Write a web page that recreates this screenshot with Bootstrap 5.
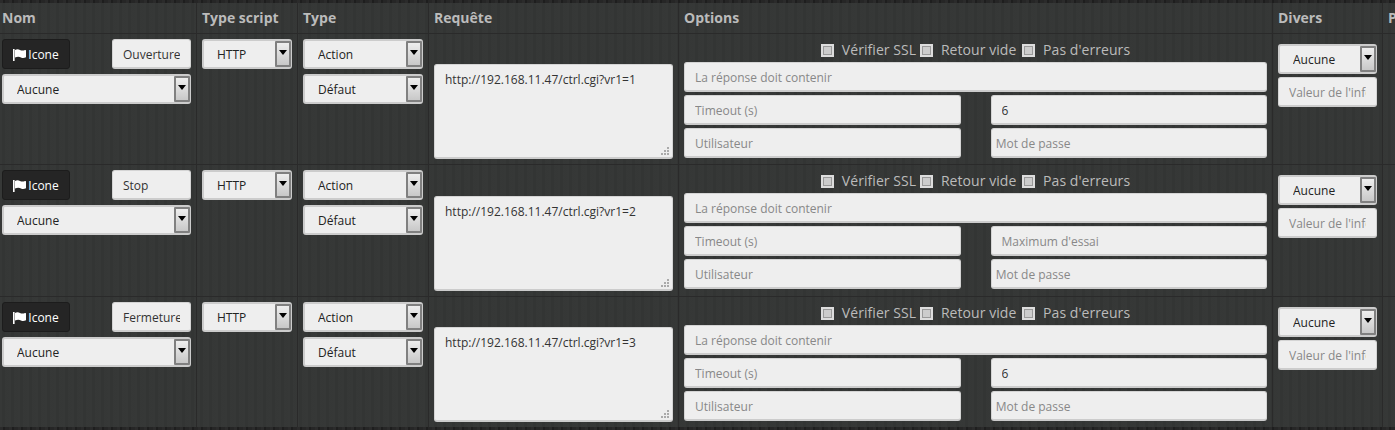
<!DOCTYPE html>
<html lang="fr"><head><meta charset="utf-8"><title>Scripts</title>
<link rel="stylesheet" href="https://cdn.jsdelivr.net/npm/bootstrap@5.3.0/dist/css/bootstrap.min.css">
<style>
html,body{height:100%;overflow:hidden}
body{background:#222 repeating-linear-gradient(90deg,#2b2b2b 0 3px,#1e1e1e 3px 5px,#262626 5px 9px);font-family:"Open Sans",sans-serif;font-size:12px;padding-top:3px;height:430px}
.wrap-x{overflow:hidden;width:1395px;height:424px;background:#343635 repeating-linear-gradient(90deg,rgba(255,255,255,.01) 0 2px,rgba(0,0,0,.02) 2px 5px,rgba(255,255,255,.006) 5px 9px)}
.table.cfg-table{width:1495px;table-layout:fixed;border-collapse:separate;border-spacing:0;margin:0;--bs-table-bg:transparent;--bs-table-color:#bbb}
.table.cfg-table>thead>tr>th{height:31px;padding:0 5px 1px 2px;font-size:14px;font-weight:700;color:#bbb;vertical-align:middle;border-width:0 1px 1px 0;border-style:solid;border-color:#2a2a2a;white-space:nowrap;line-height:20px;box-shadow:none}
.table.cfg-table>thead>tr>th.pad5{padding-left:5px}
.table.cfg-table>tbody>tr>td{padding:5px;vertical-align:top;border-width:0 1px 1px 0;border-style:solid;border-color:#2a2a2a;box-shadow:none}
.table.cfg-table>tbody>tr>td.nom-cell{padding-left:2px}
.table.cfg-table>tbody>tr>td.req-cell{vertical-align:bottom}
.table.cfg-table>tbody>tr>td.div-cell{padding-top:10px}
.r1{height:131px}.r2{height:132px}.r3{height:131px}
.form-control.fld,.form-select.fld{height:30px;min-height:30px;background:#eee;border:1px solid #d4d4d4;border-bottom:2px solid #ccc;border-radius:3px;font-size:12px;line-height:18px;color:#333;padding:1px 10px 0 10px;box-shadow:none}
.fld::placeholder{color:#888;opacity:1}
.fld.pl4{padding-left:4px}
.sel-box{position:relative;height:30px}
.form-select.fld{padding-left:13px;padding-top:2px;width:100%;appearance:none;background-image:none;color:#222;border:2px solid #ccc}
.sel-arrow{position:absolute;right:1px;top:2px;bottom:2px;width:16px;border:2px solid #808080;border-radius:1px;background:linear-gradient(#eee,#c8c8c8);pointer-events:none;display:flex;justify-content:center;padding-top:7px}
.sel-arrow::after{content:"";display:block;width:0;height:0;border:4px solid transparent;border-top:5px solid #000;border-bottom:0}
.btn.icon-btn{height:30px;width:68px;padding:0;background:#252525;border:1px solid #1c1c1c;border-radius:3px;color:#fff;font-size:12px;line-height:29px}
.icon-btn svg{width:13px;height:12px;vertical-align:-2px;margin-right:2px}
.name-fld{width:79px!important}
.stack3{margin-top:3px}
.stack5{margin-top:5px}
.chk-line{height:24px;margin-top:-1px;font-size:14px;color:#bbb;line-height:24px;white-space:nowrap;letter-spacing:.06px}
.chk{appearance:none;width:13px;height:13px;margin:0 8px 0 0;vertical-align:-2px;background:#ccc;border:2px solid #ddd;box-shadow:inset 0 0 0 1px #999;display:inline-block}
.chk-line label{margin:0}
.chk-line label.wide{margin-left:2px}
.gap-col{width:30px;flex:none}
.req-box{position:relative;width:239px}
textarea.fld{height:95px!important;padding:6px 10px!important;resize:none;display:block;width:239px}
.grip{position:absolute;right:3px;bottom:3px;width:9px;height:9px;pointer-events:none}
</style></head><body>
<svg width="0" height="0" class="position-absolute"><defs><symbol id="flagi" viewBox="0 0 13 12"><path fill="#fff" d="M0 0h1.6v12H0zM2 1c2-1.200 3.500-.8 5 0 1.500.7 3 .8 5 0 .6-.2 1 0 1 .5v6.700c-2 1-3.500 1-5 .2-1.500-.8-3.500-1-6 0z"/></symbol><symbol id="gripi" viewBox="0 0 9 9"><path fill="#aaa" d="M6 0h2v2H6zM3 3h2v2H3zM6 3h2v2H6zM0 6h2v2H0zM3 6h2v2H3zM6 6h2v2H6z"/></symbol></defs></svg>
<div class="wrap-x">
<table class="table cfg-table">
<colgroup><col style="width:197px"><col style="width:101px"><col style="width:131px"><col style="width:250px"><col style="width:594px"><col style="width:110px"><col></colgroup>
<thead><tr><th>Nom</th><th class="pad5">Type script</th><th class="pad5">Type</th><th class="pad5">Requête</th><th class="pad5">Options</th><th class="pad5">Divers</th><th class="pad5">Paramètres</th></tr></thead>
<tbody>
<tr class="r1">
<td class="nom-cell"><div class="d-flex justify-content-between"><button type="button" class="btn icon-btn"><svg><use href="#flagi"/></svg>Icone</button><input class="form-control fld name-fld" value="Ouverture"></div>
<div class="sel-box stack5"><select class="form-select fld"><option>Aucune</option></select><span class="sel-arrow"></span></div></td>
<td><div class="sel-box"><select class="form-select fld"><option>HTTP</option></select><span class="sel-arrow"></span></div></td>
<td><div class="sel-box"><select class="form-select fld"><option>Action</option></select><span class="sel-arrow"></span></div><div class="sel-box stack5"><select class="form-select fld"><option>Défaut</option></select><span class="sel-arrow"></span></div></td>
<td class="req-cell"><div class="req-box"><textarea class="form-control fld">http://192.168.11.47/ctrl.cgi?vr1=1</textarea><svg class="grip"><use href="#gripi"/></svg></div></td>
<td><div class="chk-line text-center"><label><input type="checkbox" class="chk">Vérifier SSL</label> <label><input type="checkbox" class="chk">Retour vide</label> <label class="wide"><input type="checkbox" class="chk">Pas d'erreurs</label></div>
<input class="form-control fld" placeholder="La réponse doit contenir">
<div class="d-flex stack3"><input class="form-control fld flex-fill w-50" placeholder="Timeout (s)"><span class="gap-col"></span><input class="form-control fld flex-fill w-50" value="6"></div>
<div class="d-flex stack3"><input class="form-control fld flex-fill w-50" placeholder="Utilisateur"><span class="gap-col"></span><input class="form-control fld pl4 flex-fill w-50" placeholder="Mot de passe"></div></td>
<td class="div-cell"><div class="sel-box"><select class="form-select fld"><option>Aucune</option></select><span class="sel-arrow"></span></div><input class="form-control fld stack3" placeholder="Valeur de l'information"></td>
<td></td></tr>
<tr class="r2">
<td class="nom-cell"><div class="d-flex justify-content-between"><button type="button" class="btn icon-btn"><svg><use href="#flagi"/></svg>Icone</button><input class="form-control fld name-fld" value="Stop"></div>
<div class="sel-box stack5"><select class="form-select fld"><option>Aucune</option></select><span class="sel-arrow"></span></div></td>
<td><div class="sel-box"><select class="form-select fld"><option>HTTP</option></select><span class="sel-arrow"></span></div></td>
<td><div class="sel-box"><select class="form-select fld"><option>Action</option></select><span class="sel-arrow"></span></div><div class="sel-box stack5"><select class="form-select fld"><option>Défaut</option></select><span class="sel-arrow"></span></div></td>
<td class="req-cell"><div class="req-box"><textarea class="form-control fld">http://192.168.11.47/ctrl.cgi?vr1=2</textarea><svg class="grip"><use href="#gripi"/></svg></div></td>
<td><div class="chk-line text-center"><label><input type="checkbox" class="chk">Vérifier SSL</label> <label><input type="checkbox" class="chk">Retour vide</label> <label class="wide"><input type="checkbox" class="chk">Pas d'erreurs</label></div>
<input class="form-control fld" placeholder="La réponse doit contenir">
<div class="d-flex stack3"><input class="form-control fld flex-fill w-50" placeholder="Timeout (s)"><span class="gap-col"></span><input class="form-control fld flex-fill w-50" placeholder="Maximum d'essai"></div>
<div class="d-flex stack3"><input class="form-control fld flex-fill w-50" placeholder="Utilisateur"><span class="gap-col"></span><input class="form-control fld pl4 flex-fill w-50" placeholder="Mot de passe"></div></td>
<td class="div-cell"><div class="sel-box"><select class="form-select fld"><option>Aucune</option></select><span class="sel-arrow"></span></div><input class="form-control fld stack3" placeholder="Valeur de l'information"></td>
<td></td></tr>
<tr class="r3">
<td class="nom-cell"><div class="d-flex justify-content-between"><button type="button" class="btn icon-btn"><svg><use href="#flagi"/></svg>Icone</button><input class="form-control fld name-fld" value="Fermeture"></div>
<div class="sel-box stack5"><select class="form-select fld"><option>Aucune</option></select><span class="sel-arrow"></span></div></td>
<td><div class="sel-box"><select class="form-select fld"><option>HTTP</option></select><span class="sel-arrow"></span></div></td>
<td><div class="sel-box"><select class="form-select fld"><option>Action</option></select><span class="sel-arrow"></span></div><div class="sel-box stack5"><select class="form-select fld"><option>Défaut</option></select><span class="sel-arrow"></span></div></td>
<td class="req-cell"><div class="req-box"><textarea class="form-control fld">http://192.168.11.47/ctrl.cgi?vr1=3</textarea><svg class="grip"><use href="#gripi"/></svg></div></td>
<td><div class="chk-line text-center"><label><input type="checkbox" class="chk">Vérifier SSL</label> <label><input type="checkbox" class="chk">Retour vide</label> <label class="wide"><input type="checkbox" class="chk">Pas d'erreurs</label></div>
<input class="form-control fld" placeholder="La réponse doit contenir">
<div class="d-flex stack3"><input class="form-control fld flex-fill w-50" placeholder="Timeout (s)"><span class="gap-col"></span><input class="form-control fld flex-fill w-50" value="6"></div>
<div class="d-flex stack3"><input class="form-control fld flex-fill w-50" placeholder="Utilisateur"><span class="gap-col"></span><input class="form-control fld pl4 flex-fill w-50" placeholder="Mot de passe"></div></td>
<td class="div-cell"><div class="sel-box"><select class="form-select fld"><option>Aucune</option></select><span class="sel-arrow"></span></div><input class="form-control fld stack3" placeholder="Valeur de l'information"></td>
<td></td></tr>
</tbody></table>
</div>
</body></html>
